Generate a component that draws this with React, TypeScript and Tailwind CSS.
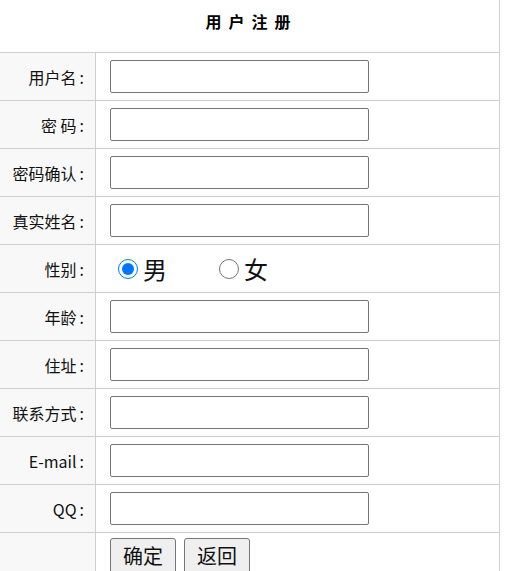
import { useState } from "react";

const fields = [
  { label: "用户名", type: "text" },
  { label: "密 码", type: "password" },
  { label: "密码确认", type: "password" },
  { label: "真实姓名", type: "text" },
  { label: "性别", type: "gender" },
  { label: "年龄", type: "text" },
  { label: "住址", type: "text" },
  { label: "联系方式", type: "text" },
  { label: "E-mail", type: "text" },
  { label: "QQ", type: "text" },
];

export default function App() {
  const [sex, setSex] = useState("男");

  return (
    <div className="min-h-screen bg-white font-['Noto_Sans_CJK_SC','Noto_Sans',sans-serif] text-[#111]">
      <div className="w-[500px] border-r border-[#cfcfcf]">
        <div className="h-[53px] border-b border-[#cfcfcf] flex justify-center pt-[9px]">
          <h1 className="text-[16px] font-bold tracking-[7px] pl-[4px] text-black">用户注册</h1>
        </div>

        {fields.map((f) => (
          <div key={f.label} className="flex h-12 border-b border-[#cfcfcf]">
            <div className="w-[96px] shrink-0 bg-[#f8f8f8] border-r border-[#cfcfcf] flex items-center justify-end text-[16px] whitespace-nowrap pr-[11px]">
              <span>{f.label}</span>
              <span className="ml-[3px]">:</span>
            </div>
            <div className="flex-1 flex items-center pl-[14px]">
              {f.type === "gender" ? (
                <div className="flex items-center">
                  <label className="flex items-center ml-2 mr-[52px] text-[24px] leading-none">
                    <input
                      type="radio"
                      name="sex"
                      checked={sex === "男"}
                      onChange={() => setSex("男")}
                      className="w-5 h-5 m-0 mr-[5px] accent-[#0075ff]"
                    />
                    男
                  </label>
                  <label className="flex items-center text-[24px] leading-none">
                    <input
                      type="radio"
                      name="sex"
                      checked={sex === "女"}
                      onChange={() => setSex("女")}
                      className="w-5 h-5 m-0 mr-[5px]"
                    />
                    女
                  </label>
                </div>
              ) : (
                <input
                  type={f.type}
                  className="w-[259px] h-[33px] border border-[#767676] rounded-[2px] bg-white px-1 outline-none"
                />
              )}
            </div>
          </div>
        ))}

        <div className="flex h-12">
          <div className="w-[96px] shrink-0 bg-[#f8f8f8] border-r border-[#cfcfcf]" />
          <div className="flex-1 flex items-start gap-2 pl-[14px] pt-[5px]">
            <button className="h-[36px] px-[12px] text-[20px] leading-none bg-[#efefef] border border-[#767676] rounded-[3px]">
              确定
            </button>
            <button className="h-[36px] px-[12px] text-[20px] leading-none bg-[#efefef] border border-[#767676] rounded-[3px]">
              返回
            </button>
          </div>
        </div>
      </div>
    </div>
  );
}
